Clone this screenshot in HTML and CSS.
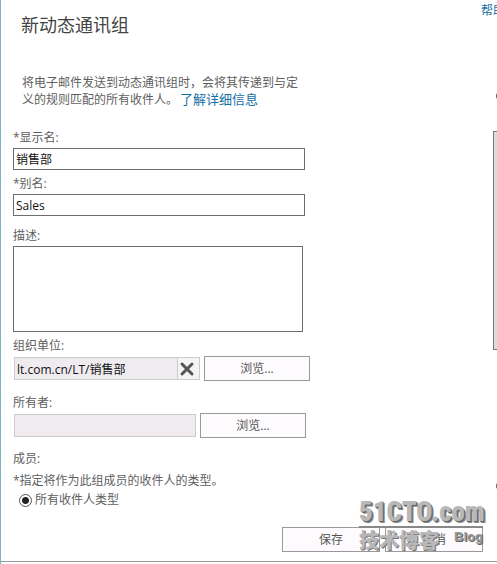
FILE: index.html
```html
<!DOCTYPE html>
<html lang="zh-CN">
<head>
    <meta charset="UTF-8">
    <meta name="viewport" content="width=device-width, initial-scale=1">
    <title>新动态通讯组</title>
    <link rel="stylesheet" href="styles.css">
</head>
<body>
    <div class="dialog">
        <form class="main">
            <h1>新动态通讯组</h1>
            <p class="intro">将电子邮件发送到动态通讯组时，会将其传递到与定义的规则匹配的所有收件人。<a href="#">了解详细信息</a></p>

            <div class="field">
                <label for="display-name">*显示名:</label>
                <input type="text" id="display-name" value="销售部">
            </div>
            <div class="field">
                <label for="alias">*别名:</label>
                <input type="text" id="alias" value="Sales">
            </div>
            <div class="field field-notes">
                <label for="notes">描述:</label>
                <textarea id="notes"></textarea>
            </div>
            <div class="field">
                <label for="unit">组织单位:</label>
                <div class="picker">
                    <div class="picked">
                        <input type="text" id="unit" value="lt.com.cn/LT/销售部" readonly>
                        <button type="button" class="clear" aria-label="清除">
                            <svg width="16" height="16" viewBox="0 0 16 16"><path d="M3 3L13 13M13 3L3 13" stroke="#555" stroke-width="3" stroke-linecap="round"/></svg>
                        </button>
                    </div>
                    <button type="button" class="btn">浏览...</button>
                </div>
            </div>
            <div class="field field-owner">
                <label for="owner">所有者:</label>
                <div class="picker">
                    <div class="picked picked-empty">
                        <input type="text" id="owner" readonly>
                    </div>
                    <button type="button" class="btn">浏览...</button>
                </div>
            </div>
            <fieldset class="members">
                <legend>成员:</legend>
                <p>*指定将作为此组成员的收件人的类型。</p>
                <label><input type="radio" name="members" checked>所有收件人类型</label>
            </fieldset>
        </form>

        <div class="side">
            <a href="#" class="help">帮助</a>
            <div class="scroll">
                <svg width="8" height="8" viewBox="0 0 8 8"><path d="M0 2L4 0L8 2V6L4 8L0 6Z" fill="#777"/></svg>
                <div class="thumb"></div>
                <svg class="down" width="8" height="8" viewBox="0 0 8 8"><path d="M0 2L4 0L8 2V6L4 8L0 6Z" fill="#777"/></svg>
            </div>
        </div>
    </div>

    <div class="footer">
        <button type="button" class="btn">保存</button>
        <button type="button" class="btn">取消</button>
        <div class="watermark">
            <div class="mark-site">51CTO.com</div>
            <div class="mark-sub"><span class="mark-cn">技术博客</span><span class="mark-blog">Blog</span></div>
        </div>
    </div>
</body>
</html>
```

FILE: styles.css
```css
* {
    margin: 0;
    padding: 0;
    box-sizing: border-box;
}
body {
    display: flex;
    flex-direction: column;
    min-height: 100vh;
    overflow: hidden;
    border-left: 1px solid #7fb6c4;
    background: #fff;
    color: #5e5e5e;
    font-family: "Open Sans", "Noto Sans CJK SC", sans-serif;
    font-size: 12px;
    line-height: 20px;
}
input, textarea, button {
    font: inherit;
    color: #111;
}
a {
    color: #1570a6;
    text-decoration: none;
}

.dialog {
    display: flex;
    justify-content: space-between;
}
.main {
    width: 100%;
    max-width: 311px;
    padding: 12px 0 0 12px;
}
h1 {
    margin-left: 8px;
    font-size: 18px;
    font-weight: 400;
    line-height: 26px;
    color: #444;
}
.intro {
    margin: 36px 6px 20px 9px;
    line-height: 17px;
}
.intro a {
    margin-left: 2px;
    font-size: 13px;
}

.field {
    margin-bottom: 4px;
}
.field label {
    display: block;
}
.field > input, textarea {
    display: block;
    width: 292px;
    max-width: 100%;
    height: 22px;
    padding: 0 2px;
    border: 1px solid #6d6d6d;
    background: #fff;
}
.field-notes {
    margin-top: 10px;
}
.field > textarea {
    width: 290px;
    height: 86px;
    resize: none;
}

.picker {
    display: flex;
    align-items: center;
    gap: 4px;
    padding-left: 1px;
}
.picked {
    display: flex;
    width: 186px;
    height: 23px;
    border: 1px solid #ccc;
    background: #efebef;
}
.picked input {
    flex: 1;
    min-width: 0;
    padding: 2px 2px 0;
    border: 0;
    background: transparent;
}
.picked-empty {
    width: 182px;
}
.clear {
    display: flex;
    align-items: center;
    justify-content: center;
    width: 22px;
    padding-right: 4px;
    border: 0;
    border-left: 1px solid #ccc;
    background: #f5f3f5;
}
.btn {
    width: 106px;
    height: 25px;
    border: 1px solid #999;
    background: #fdfbfd;
    color: #555;
}
.field-owner {
    margin-top: 12px;
}

.members {
    margin-top: 11px;
    border: 0;
}
.members label {
    display: flex;
    align-items: center;
    gap: 3px;
    margin-left: 6px;
    line-height: 18px;
}
.members p {
    margin-top: 2px;
}
.members input {
    appearance: none;
    width: 13px;
    height: 13px;
    border: 1px solid #555;
    border-radius: 50%;
    background: radial-gradient(circle, #222 3px, #fff 4px);
}

.side {
    display: flex;
    flex-direction: column;
    width: 16px;
    padding-top: 1px;
}
.help {
    white-space: nowrap;
}
.scroll {
    margin: 71px 0 0 15px;
}
.scroll svg {
    display: block;
}
.thumb {
    width: 12px;
    height: 219px;
    margin: 31px 0 0 -3px;
    border: 1px solid #777;
    background: #ddd;
}
.scroll .down {
    margin-top: 132px;
}

.footer {
    position: relative;
    display: flex;
    justify-content: flex-end;
    gap: 5px;
    margin-top: auto;
    margin-bottom: 2px;
    padding: 0 14px 9px 0;
    border-bottom: 1px solid #999;
}
.footer .btn {
    width: 98px;
}
/* site mark laid over the buttons */
.watermark {
    position: absolute;
    right: 14px;
    bottom: 6px;
    width: 124px;
    color: #b8b8b8;
    font-family: "Roboto Condensed", Roboto, "Noto Sans CJK SC", sans-serif;
    font-weight: 900;
    text-shadow: 1px 1px 0 #666, 2px 2px 0 #888;
    white-space: nowrap;
    pointer-events: none;
}
.mark-site {
    border-bottom: 2px solid #888;
    font-size: 27px;
    line-height: 28px;
}
.mark-sub {
    display: flex;
    justify-content: space-between;
}
.mark-cn {
    font-size: 20px;
    line-height: 27px;
    text-shadow: 1px 1px 0 #777;
}
.mark-blog {
    color: #999;
    font-family: "Liberation Sans", sans-serif;
    font-size: 13px;
    line-height: 18px;
    text-shadow: 1px 1px 0 #666;
}
```
